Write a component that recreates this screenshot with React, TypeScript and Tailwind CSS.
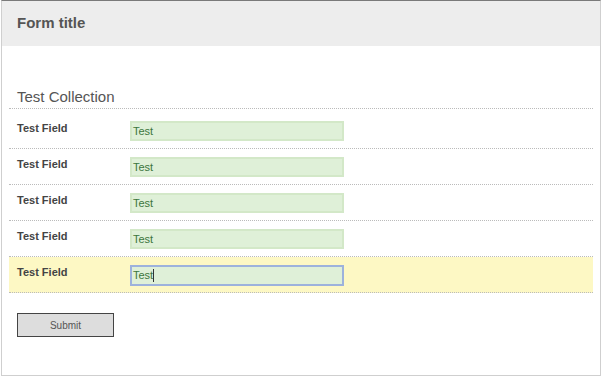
import React from "react";

const rows = [false, false, false, false, true];

export default function App() {
  return (
    <div className="w-[604px] h-[378px] bg-white" style={{ fontFamily: '"Liberation Sans", Arial, sans-serif' }}>
      <div className="ml-px w-[600px] h-[376px] border border-[#cfcfcf] border-t-[#7a7a7a] flex flex-col">
        <div className="h-[45px] bg-[#ededed] pl-[15px] pb-[2px] flex items-center">
          <span className="text-[15px] font-bold text-[#555] leading-[17px]">Form title</span>
        </div>
        <div className="ml-[7px] w-[584px]">
          <div className="mt-[42px] pb-[3px] pl-[8px] border-b border-dotted border-[#bbb] text-[15px] leading-[17px] text-[#555]">
            Test Collection
          </div>
          <div className="h-[4px]" />
          {rows.map((hl, i) => (
            <div
              key={i}
              className={
                "h-[36px] border-b border-dotted border-[#bbb] flex items-start " +
                (hl ? "bg-[#fdf8c4]" : "")
              }
            >
              <div className="w-[121px] pl-[8px] pt-[9px] text-[11px] leading-[13px] font-bold text-[#444]">
                Test Field
              </div>
              <div
                className={
                  "mt-[8px] w-[214px] h-[20px] bg-[#dff0d8] border-2 flex items-center pl-[1px] text-[11px] leading-[13px] text-[#3c763d] " +
                  (hl ? "border-[#9db2dc] h-[21px] mt-[7px]" : "border-[#d3e8c8]")
                }
              >
                {hl ? (
                  <span className="flex items-center">
                    Test<span className="inline-block w-px h-[13px] bg-[#333]" />
                  </span>
                ) : (
                  "Test"
                )}
              </div>
            </div>
          ))}
          <div className="pt-[20px] pl-[8px]">
            <div className="w-[97px] h-[24px] bg-[#dddddd] border border-[#444] flex items-center justify-center text-[10px] text-[#555]">
              Submit
            </div>
          </div>
        </div>
      </div>
    </div>
  );
}
